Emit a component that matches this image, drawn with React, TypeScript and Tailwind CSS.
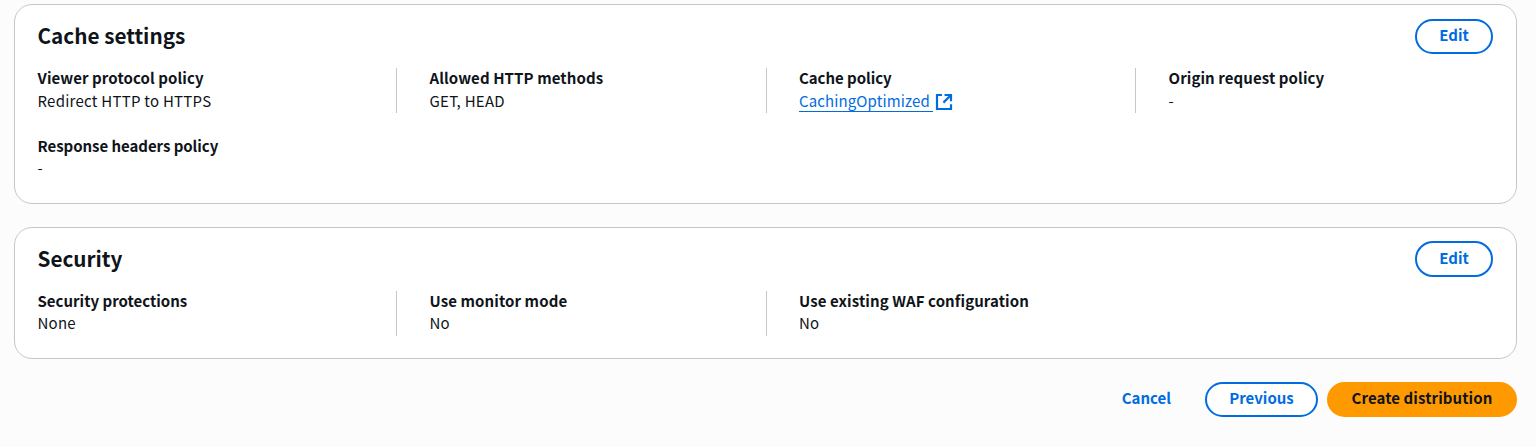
import type { ReactNode } from "react";

function ExternalIcon() {
  return (
    <svg className="mt-[2px] ml-[1.5px] h-[18px] w-[18px] shrink-0" viewBox="0 0 18 18" fill="none" stroke="currentColor" strokeWidth="2.2">
      <path d="M7 2H2V16H16V11.2" />
      <path d="M9.6 2H16V8.2" />
      <path d="M16 2L8.4 9.6" />
    </svg>
  );
}

interface ButtonProps {
  children: ReactNode;
  variant?: "normal" | "primary" | "link";
  sizeClass?: string;
}

function Button({ children, variant = "normal", sizeClass = "h-[35px]" }: ButtonProps) {
  const base = `flex items-center justify-center rounded-full border-2 px-[22px] pb-[3px] font-bold leading-[22px] whitespace-nowrap ${sizeClass}`;
  if (variant === "primary") {
    return <button className={`${base} w-[190px] border-[#ff9900] bg-[#ff9900] tracking-[0.08px] text-[#0f141a]`}>{children}</button>;
  }
  if (variant === "link") {
    return <button className={`${base} border-transparent text-[#006ce0]`}>{children}</button>;
  }
  return <button className={`${base} border-[#006ce0] bg-white text-[#006ce0]`}>{children}</button>;
}

interface FieldProps {
  label: string;
  children: ReactNode;
  divided?: boolean;
  labelClass?: string;
  valueClass?: string;
}

function Field({ label, children, divided = false, labelClass = "tracking-[0.09px]", valueClass = "leading-[21px]" }: FieldProps) {
  return (
    <div className={divided ? "h-[45px] border-l border-[#c6c6cd] pl-[32.5px]" : "h-[45px]"}>
      <div className={`h-[22px] leading-[20px] font-bold ${labelClass}`}>{label}</div>
      <div className={`h-[23px] tracking-[0.25px] ${valueClass}`}>{children}</div>
    </div>
  );
}

interface CardProps {
  title: string;
  className: string;
  editClass?: string;
  children: ReactNode;
}

function Card({ title, className, editClass, children }: CardProps) {
  return (
    <section className={`rounded-[18px] border border-[#c6c6cd] bg-white pr-[23px] pl-[22.5px] ${className}`}>
      <header className="flex h-[35px] items-end justify-between">
        <h2 className="pb-[6.5px] text-[20.7px] leading-[26px] font-bold">{title}</h2>
        <div className="flex w-[78px] flex-col">
          <Button sizeClass={editClass}>Edit</Button>
        </div>
      </header>
      <div className="mt-[14px] grid grid-cols-[358.5px_369.5px_369.5px_1fr] gap-y-[23px]">{children}</div>
    </section>
  );
}

export default function App() {
  return (
    <main className="h-[447px] overflow-hidden bg-[#fcfcfd] pt-1 pr-[19px] pl-[14px] font-['Noto_Sans_CJK_SC','Noto_Sans',sans-serif] text-[15px] text-[#0f141a]">
      <Card title="Cache settings" className="h-[200px] pt-[14px]">
        <Field label="Viewer protocol policy">Redirect HTTP to HTTPS</Field>
        <Field label="Allowed HTTP methods" divided>GET, HEAD</Field>
        <Field label="Cache policy" labelClass="tracking-[-0.05px]" divided>
          <a className="flex w-fit items-center text-[#006ce0]">
            <span className="h-[22px] border-b border-[#006ce0] pr-[3.5px] tracking-[0.12px]">CachingOptimized</span>
            <ExternalIcon />
          </a>
        </Field>
        <Field label="Origin request policy" divided>-</Field>
        <Field label="Response headers policy" labelClass="tracking-[-0.05px]" valueClass="leading-[19px]">-</Field>
      </Card>
      <Card title="Security" className="mt-[23px] h-[132px] pt-[14px]" editClass="h-[36px]">
        <Field label="Security protections" labelClass="tracking-[0px]" valueClass="leading-[19px]">None</Field>
        <Field label="Use monitor mode" valueClass="leading-[19px]" divided>No</Field>
        <Field label="Use existing WAF configuration" valueClass="leading-[19px]" divided>No</Field>
      </Card>
      <footer className="mt-[23px] flex items-center justify-end">
        <Button variant="link">Cancel</Button>
        <div className="mr-[9px] ml-[10px] flex w-[113px] flex-col">
          <Button>Previous</Button>
        </div>
        <Button variant="primary">Create distribution</Button>
      </footer>
    </main>
  );
}
